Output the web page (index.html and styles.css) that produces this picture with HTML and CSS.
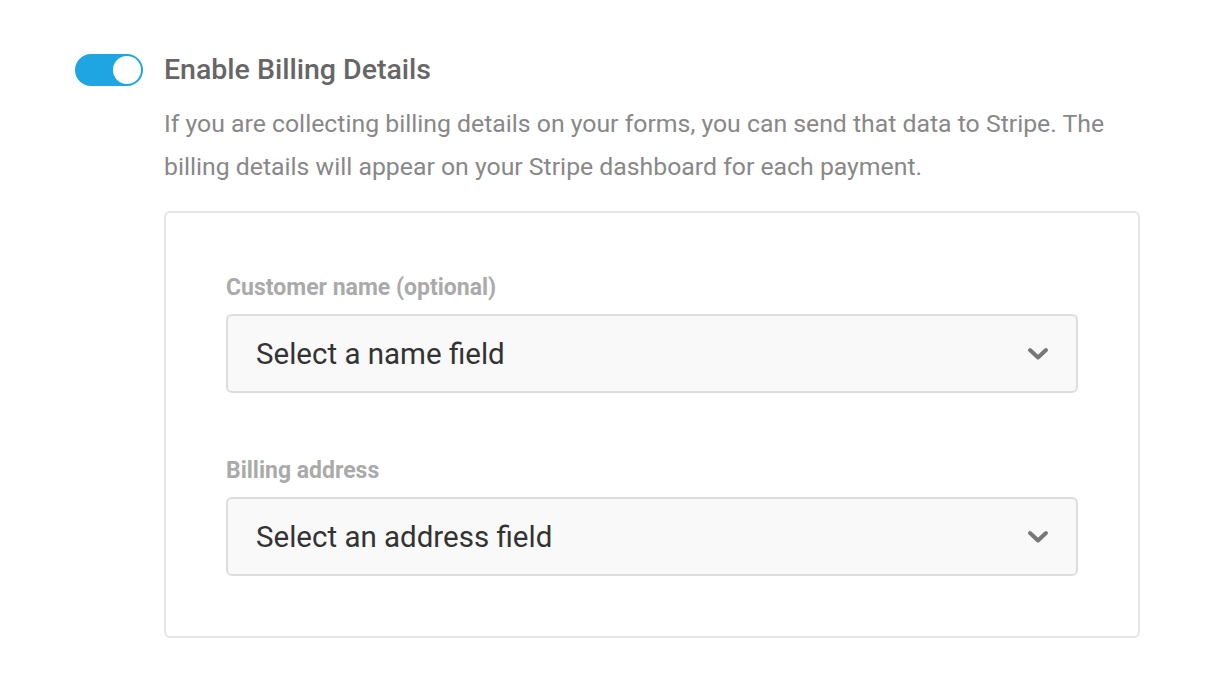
FILE: index.html
```html
<!DOCTYPE html>
<html>
<head>
<meta charset="utf-8">
<link rel="stylesheet" href="styles.css">
</head>
<body>
<div class="page">
  <div class="setting">
    <div class="toggle"><span class="knob"></span></div>
    <div class="content">
      <div class="title">Enable Billing Details</div>
      <p class="desc">If you are collecting billing details on your forms, you can send that data to Stripe. The billing details will appear on your Stripe dashboard for each payment.</p>
      <div class="box">
        <div class="field">
          <div class="label">Customer name (optional)</div>
          <div class="select">
            <span>Select a name field</span>
            <svg class="chev" width="22" height="14" viewBox="0 0 22 14"><path d="M3 3 L11 10.5 L19 3" fill="none" stroke="#777" stroke-width="4" stroke-linecap="round" stroke-linejoin="round"/></svg>
          </div>
        </div>
        <div class="field">
          <div class="label">Billing address</div>
          <div class="select">
            <span>Select an address field</span>
            <svg class="chev" width="22" height="14" viewBox="0 0 22 14"><path d="M3 3 L11 10.5 L19 3" fill="none" stroke="#777" stroke-width="4" stroke-linecap="round" stroke-linejoin="round"/></svg>
          </div>
        </div>
      </div>
    </div>
  </div>
</div>
</body>
</html>
```
FILE: styles.css
```css
* { box-sizing: border-box; }
html, body { margin: 0; padding: 0; background: #fff; }
body { font-family: Roboto, "Liberation Sans", sans-serif; }
.page { padding: 54px 0 0 75px; }
.setting { display: flex; gap: 21px; align-items: flex-start; }
.toggle {
  flex: none;
  width: 68px; height: 32px;
  border-radius: 16px;
  background: #1ea5e2;
  position: relative;
}
.knob {
  position: absolute;
  right: 2px; top: 2px;
  width: 28px; height: 28px;
  border-radius: 50%;
  background: #fff;
}
.content { width: 976px; }
.title {
  font-size: 28.5px; font-weight: 500; color: #666;
  line-height: 32px;
}
.desc {
  margin: 16px 0 0;
  font-size: 24.8px; line-height: 43px; color: #888;
}
.box {
  margin-top: 23px;
  border: 2px solid #e6e6e6;
  border-radius: 6px;
  padding: 63px 60px 60px 60px;
}
.field + .field { margin-top: 66px; }
.label {
  font-size: 23px; font-weight: 700; color: #aaa;
  line-height: 24px;
  margin-bottom: 14px;
}
.select {
  height: 79px;
  background: #f9f9f9;
  border: 2px solid #ddd;
  border-radius: 6px;
  display: flex; align-items: center; justify-content: space-between;
  padding: 0 27px 0 28px;
  font-size: 29.5px; color: #333;
}
.chev { display: block; }
```
